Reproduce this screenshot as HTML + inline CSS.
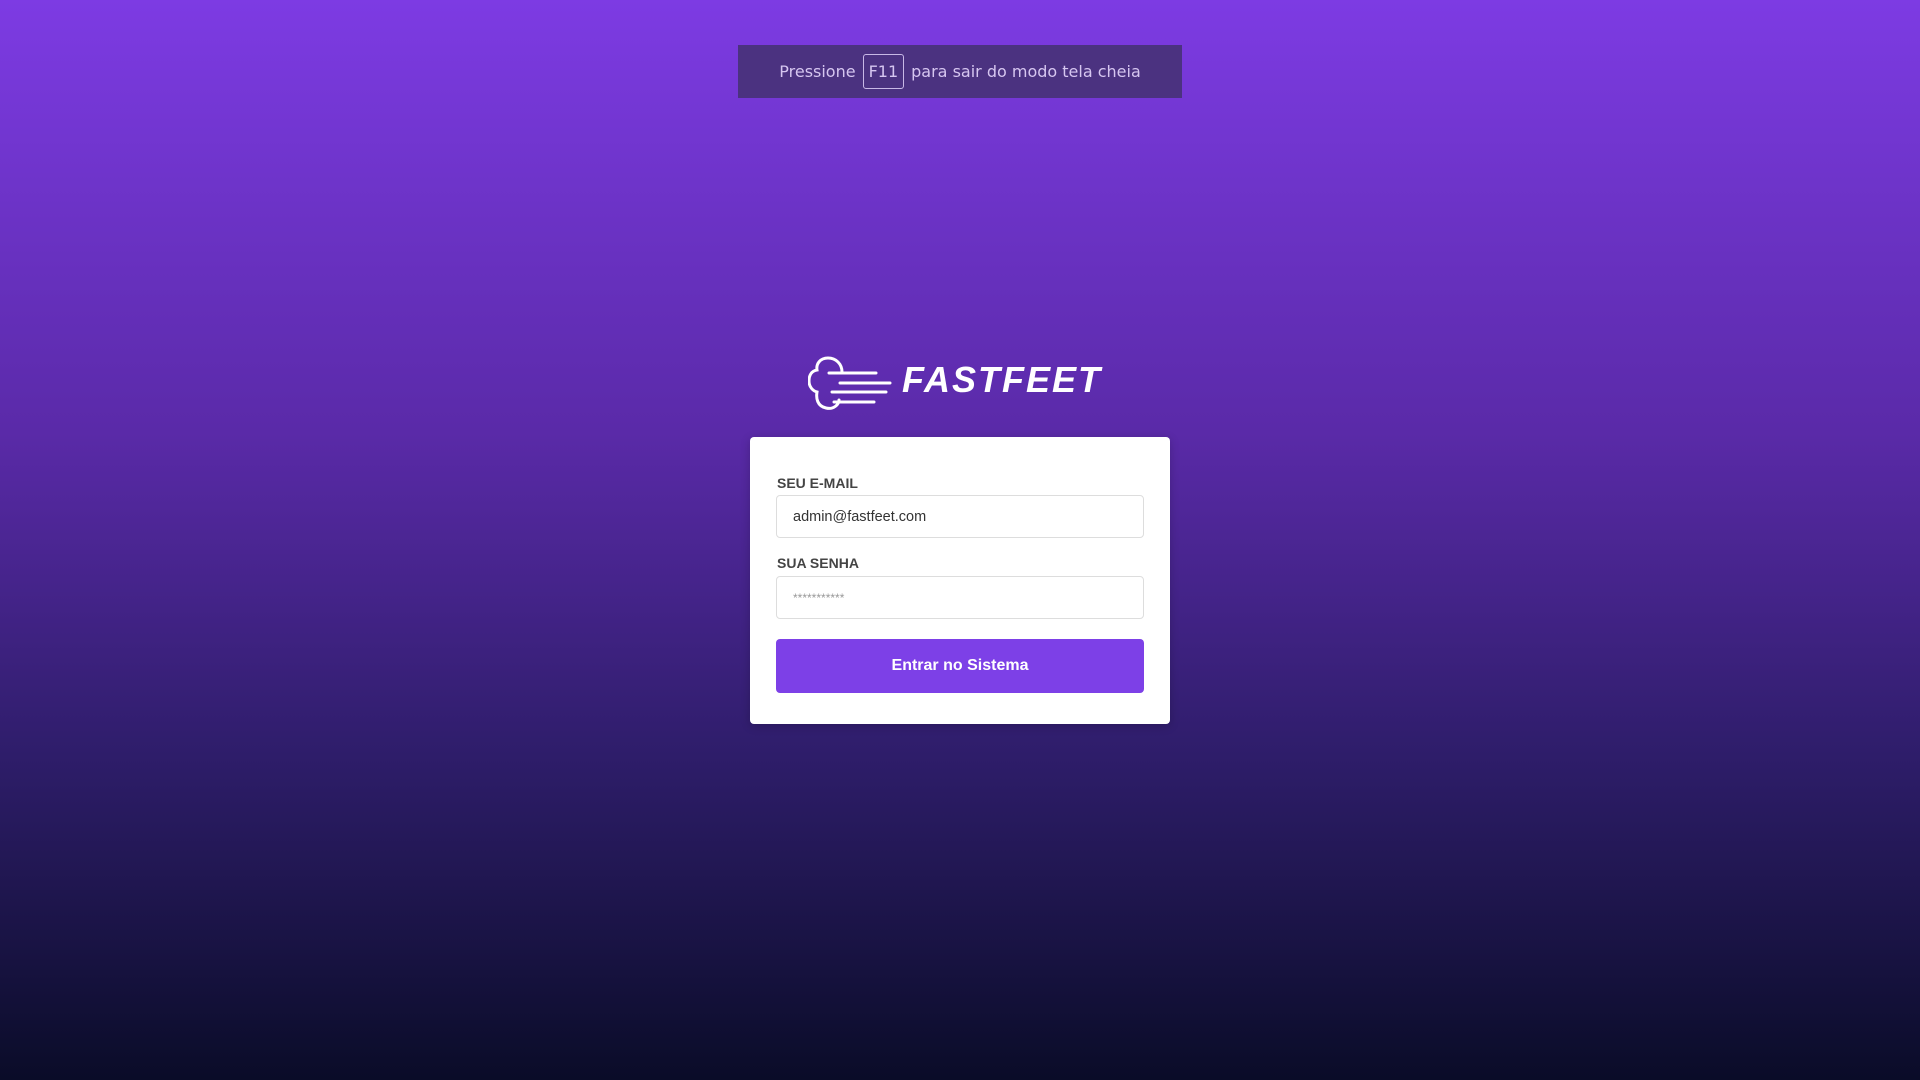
<!DOCTYPE html>
<html><head><meta charset="utf-8"><style>
html,body{margin:0;padding:0;width:1920px;height:1080px;overflow:hidden}
body{background:linear-gradient(180deg,#7d3be3 0%,#5a2aa8 40%,#2e1d6a 70%,#0a0c28 100%);font-family:"Liberation Sans",Arial,sans-serif;position:relative}
.bar{position:absolute;left:738px;top:45px;width:444px;height:53px;background:#4b3280;color:#d6c6f0;font-family:"DejaVu Sans","Liberation Sans",sans-serif;font-size:16px;display:flex;align-items:center;justify-content:center}
.key{border:1px solid #c8b8e6;border-radius:3px;padding:7px 5px;margin:0 7px}
.logo{position:absolute;left:808px;top:356px}
.ft{position:absolute;left:902px;top:359px;color:#fff;font-weight:bold;font-style:italic;font-size:36px;letter-spacing:2px}
.card{position:absolute;left:750px;top:437px;width:420px;height:287px;background:#fff;border-radius:4px;box-shadow:0 2px 10px rgba(0,0,0,.2)}
label{position:absolute;left:27px;font-size:14px;font-weight:bold;color:#444}
.in{position:absolute;left:26px;width:368px;height:43px;border:1px solid #ddd;border-radius:4px;box-sizing:border-box;padding-left:16px;display:flex;align-items:center;font-size:14.5px;color:#333}
.btn{position:absolute;left:26px;top:202px;width:368px;height:54px;background:#7d40e7;border-radius:4px;color:#fff;font-weight:bold;font-size:16px;display:flex;align-items:center;justify-content:center}
</style></head><body>
<div class="bar">Pressione <span class="key">F11</span> para sair do modo tela cheia</div>
<svg class="logo" width="84" height="56" viewBox="0 0 84 56" fill="none" stroke="#fff" stroke-width="3" stroke-linecap="round">
<path d="M34 16 C34 8 28 2 20 2 C12 2 8 8 9 14 C3 15 1 20 1 25 C1 31 5 35 9 36 C8 42 9 50 18 52 C26 54 31 48 31 44"/>
<path d="M21 17 H68"/><path d="M32 27 H82"/><path d="M24 36 H78"/><path d="M26 46 H66"/>
</svg>
<div class="ft">FASTFEET</div>
<div class="card">
<label style="top:38px">SEU E-MAIL</label>
<div class="in" style="top:58px">admin@fastfeet.com</div>
<label style="top:118px">SUA SENHA</label>
<div class="in" style="top:139px;color:#999;font-size:12px">***********</div>
<div class="btn">Entrar no Sistema</div>
</div>
</body></html>
